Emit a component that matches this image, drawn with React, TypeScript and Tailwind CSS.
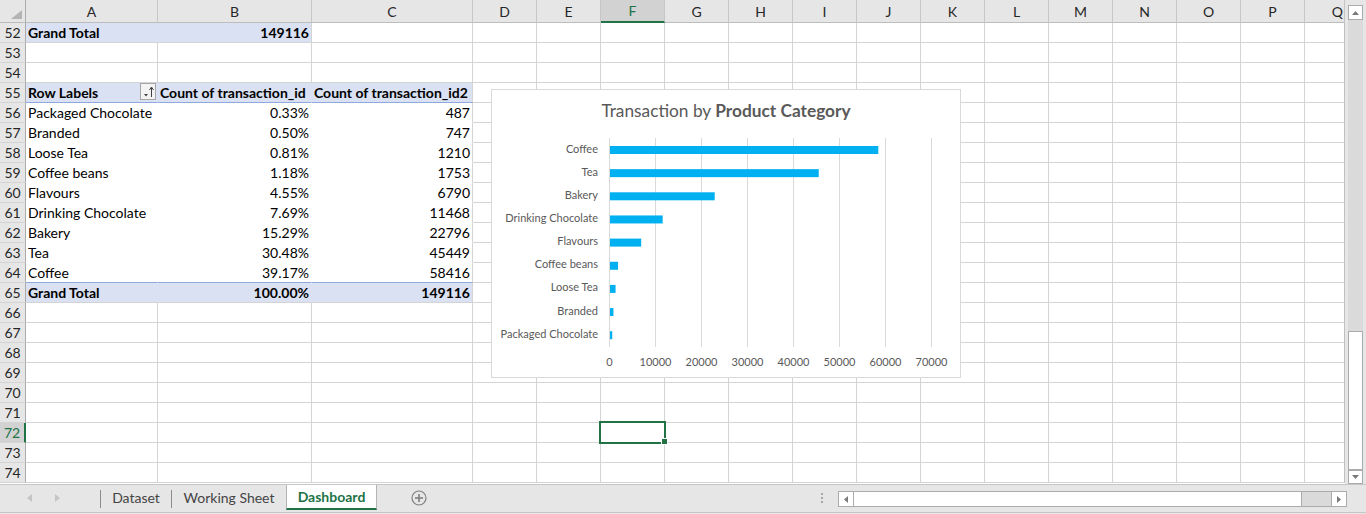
import React from 'react';

const COLS = ['A', 'B', 'C', 'D', 'E', 'F', 'G', 'H', 'I', 'J', 'K', 'L', 'M', 'N', 'O', 'P', 'Q'];
const ROWS = Array.from({ length: 23 }, (_, i) => 52 + i);

const PIVOT: [string, string, string][] = [
  ['Packaged Chocolate', '0.33%', '487'],
  ['Branded', '0.50%', '747'],
  ['Loose Tea', '0.81%', '1210'],
  ['Coffee beans', '1.18%', '1753'],
  ['Flavours', '4.55%', '6790'],
  ['Drinking Chocolate', '7.69%', '11468'],
  ['Bakery', '15.29%', '22796'],
  ['Tea', '30.48%', '45449'],
  ['Coffee', '39.17%', '58416'],
];

const CATS: [string, number][] = [
  ['Coffee', 58416],
  ['Tea', 45449],
  ['Bakery', 22796],
  ['Drinking Chocolate', 11468],
  ['Flavours', 6790],
  ['Coffee beans', 1753],
  ['Loose Tea', 1210],
  ['Branded', 747],
  ['Packaged Chocolate', 487],
];

const GRID = 'grid grid-cols-[26px_132px_154px_161px_repeat(13,64px)_40px]';

type Info = {
  text: string;
  right: boolean;
  bold: boolean;
  bg: string;
  br: string;
  bb: string;
  sort: boolean;
};

function cellInfo(r: number, c: number): Info {
  const info: Info = {
    text: '',
    right: false,
    bold: false,
    bg: 'bg-transparent',
    br: c === 16 ? 'border-r-[#bfbfbf]' : 'border-r-[#d4d4d4]',
    bb: 'border-b-[#d4d4d4]',
    sort: false,
  };
  if (r === 52 && c <= 1) {
    info.bg = 'bg-[#d9e1f2]';
    info.bold = true;
    if (c === 0) {
      info.text = 'Grand Total';
      info.br = 'border-r-[#d9e1f2]';
    } else {
      info.text = '149116';
      info.right = true;
    }
  }
  if (r === 55 && c <= 2) {
    info.bg = 'bg-[#d9e1f2]';
    info.bold = true;
    info.bb = 'border-b-[#8ea9db]';
    if (c < 2) info.br = 'border-r-[#d9e1f2]';
    info.text = ['Row Labels', 'Count of transaction_id', 'Count of transaction_id2'][c];
    if (c === 0) info.sort = true;
  }
  if (r >= 56 && r <= 64 && c <= 2) {
    const row = PIVOT[r - 56];
    info.text = row[c];
    info.right = c > 0;
    if (c < 2) info.br = 'border-r-white';
    info.bb = r === 64 ? 'border-b-[#8ea9db]' : 'border-b-white';
  }
  if (r === 65 && c <= 2) {
    info.bg = 'bg-[#d9e1f2]';
    info.bold = true;
    if (c < 2) info.br = 'border-r-[#d9e1f2]';
    info.text = ['Grand Total', '100.00%', '149116'][c];
    info.right = c > 0;
  }
  return info;
}

function SortIcon() {
  return (
    <div className="absolute right-[1px] top-0 w-[16px] h-[17px] border border-[#a6a6a6] bg-[#f3f3f3]">
      <svg width="14" height="15" viewBox="0 0 14 15" className="block">
        <path d="M3 10 L7 10 L5 12.5 Z" fill="#404040" />
        <line x1="10.5" y1="3.5" x2="10.5" y2="13" stroke="#404040" strokeWidth="1" />
        <path d="M8.5 6 L10.5 3 L12.5 6" fill="none" stroke="#404040" strokeWidth="1" />
      </svg>
    </div>
  );
}

function Cell({ r, c }: { r: number; c: number }) {
  const i = cellInfo(r, c);
  return (
    <div
      className={`relative h-[20px] border-r border-b ${i.br} ${i.bb} ${i.bg} whitespace-nowrap leading-[20px] text-[14px] text-black ${
        i.bold ? 'font-bold' : 'font-normal'
      } ${i.right ? 'text-right pr-[2px]' : 'text-left pl-[2px]'}`}
    >
      {i.text}
      {i.sort && <SortIcon />}
    </div>
  );
}

function HeaderRow() {
  return (
    <div className={`${GRID} h-[23px]`}>
      <div className="relative h-[23px] bg-[#e6e6e6] border-r border-b border-r-[#ababab] border-b-[#bdbdbd]">
        <svg width="26" height="23" className="absolute left-0 top-0">
          <path d="M22 10 L22 19 L11 19 Z" fill="#b4b4b4" />
        </svg>
      </div>
      {COLS.map((col, idx) => {
        const sel = col === 'F';
        return (
          <div
            key={col}
            className={`h-[23px] flex items-center text-[14px] ${
              idx === 16 ? 'justify-end pr-[1px]' : 'justify-center'
            } ${
              sel
                ? 'bg-[#d2d2d2] text-[#217346] border-r border-r-[#c6c6c6] border-b-2 border-b-[#217346]'
                : 'bg-[#e6e6e6] text-[#262626] border-r border-r-[#c6c6c6] border-b border-b-[#bdbdbd]'
            }`}
          >
            {col}
          </div>
        );
      })}
    </div>
  );
}

function RowHeader({ r }: { r: number }) {
  const sel = r === 72;
  return (
    <div
      className={`h-[20px] flex items-center justify-center text-[14px] border-b border-b-[#d4d4d4] ${
        sel
          ? 'bg-[#d2d2d2] text-[#217346] border-r-2 border-r-[#217346]'
          : 'bg-[#e6e6e6] text-[#262626] border-r border-r-[#ababab]'
      }`}
    >
      {r}
    </div>
  );
}

function Chart() {
  const x0 = 117.3;
  const step = 45.93;
  const s = step / 10000;
  const grid = Array.from({ length: 8 }, (_, k) => Math.round(x0 + k * step) + 0.5);
  return (
    <div className="absolute left-[491px] top-[89px] w-[470px] h-[289px] border border-[#d9d9d9] bg-white">
      <svg width="468" height="287" viewBox="0 0 468 287" className="block">
        <text x="234" y="27" textAnchor="middle" fontSize="17.3" fill="#595959">
          Transaction by <tspan fontWeight="700">Product Category</tspan>
        </text>
        {grid.map((x, k) => (
          <line key={k} x1={x} y1={48} x2={x} y2={257} stroke="#d9d9d9" strokeWidth="1" />
        ))}
        {CATS.map(([name, v], i) => {
          const top = 48 + 23.15 * i + 8;
          return (
            <g key={name}>
              <rect x={118} y={top} width={Math.max(v * s, 1.5)} height={8} fill="#00b0f0" />
              <text x="106" y={top + 6.5} textAnchor="end" fontSize="11" fill="#595959">
                {name}
              </text>
            </g>
          );
        })}
        {grid.map((x, k) => (
          <text key={k} x={x} y={275.5} textAnchor="middle" fontSize="11" fill="#595959">
            {k * 10000}
          </text>
        ))}
      </svg>
    </div>
  );
}

function VScroll() {
  return (
    <div className="w-[21px] h-[484px] bg-[#e6e6e6] pl-[3px] pt-[5px] flex flex-col">
      <div className="w-[15px] h-[15px] bg-white border border-[#ababab] flex items-center justify-center">
        <svg width="7" height="4" viewBox="0 0 7 4">
          <path d="M0 4 L3.5 0 L7 4 Z" fill="#7a7a7a" />
        </svg>
      </div>
      <div className="w-[15px] flex-1 bg-[#dadada] flex flex-col">
        <div className="mt-auto w-[15px] h-[139px] bg-white border border-[#ababab]" />
      </div>
      <div className="w-[15px] h-[14px] bg-white border border-[#ababab] flex items-center justify-center">
        <svg width="7" height="4" viewBox="0 0 7 4">
          <path d="M0 0 L7 0 L3.5 4 Z" fill="#7a7a7a" />
        </svg>
      </div>
    </div>
  );
}

function TabBar() {
  return (
    <div className="h-[30px] bg-[#e6e6e6] border-t border-t-[#c6c6c6] flex items-start text-[14px] text-[#444444] relative">
      <div className="w-[100px] h-[25px] flex items-center">
        <svg width="5" height="8" viewBox="0 0 5 8" className="ml-[27px]">
          <path d="M5 0 L0 4 L5 8 Z" fill="#c4c4c4" />
        </svg>
        <svg width="5" height="8" viewBox="0 0 5 8" className="ml-[23px]">
          <path d="M0 0 L5 4 L0 8 Z" fill="#c4c4c4" />
        </svg>
      </div>
      <div className="w-[1px] h-[18px] mt-[5px] bg-[#8c8c8c]" />
      <div className="w-[70px] h-[25px] flex items-center justify-center">Dataset</div>
      <div className="w-[1px] h-[18px] mt-[5px] bg-[#8c8c8c]" />
      <div className="w-[114px] h-[25px] flex items-center justify-center">Working Sheet</div>
      <div className="w-[91px] h-[25px] bg-white border-x border-x-[#b4b4b4] border-b-2 border-b-[#217346] flex items-center justify-center font-bold text-[#217346]">
        Dashboard
      </div>
      <div className="w-[84px] h-[25px] flex items-center justify-center">
        <svg width="16" height="16" viewBox="0 0 16 16">
          <circle cx="8" cy="8" r="7" fill="none" stroke="#808080" strokeWidth="1.2" />
          <line x1="8" y1="4" x2="8" y2="12" stroke="#808080" strokeWidth="1.6" />
          <line x1="4" y1="8" x2="12" y2="8" stroke="#808080" strokeWidth="1.6" />
        </svg>
      </div>
      <div className="w-[377px] h-[25px] flex items-center justify-end pr-[15px]">
        <div className="flex flex-col gap-[2px]">
          <div className="w-[2px] h-[2px] bg-[#a6a6a6]" />
          <div className="w-[2px] h-[2px] bg-[#a6a6a6]" />
          <div className="w-[2px] h-[2px] bg-[#a6a6a6]" />
        </div>
      </div>
      <div className="w-[509px] h-[16px] mt-[6px] flex border border-[#ababab] bg-[#dadada]">
        <div className="w-[15px] h-full bg-white border-r border-r-[#ababab] flex items-center justify-center">
          <svg width="4" height="7" viewBox="0 0 4 7">
            <path d="M4 0 L0 3.5 L4 7 Z" fill="#7a7a7a" />
          </svg>
        </div>
        <div className="w-[448px] h-full bg-white border-r border-r-[#ababab]" />
        <div className="flex-1" />
        <div className="w-[15px] h-full bg-white border-l border-l-[#ababab] flex items-center justify-center">
          <svg width="4" height="7" viewBox="0 0 4 7">
            <path d="M0 0 L4 3.5 L0 7 Z" fill="#7a7a7a" />
          </svg>
        </div>
      </div>
      <div className="absolute left-0 right-0 bottom-[1px] h-[1px] bg-[#c6c6c6]" />
    </div>
  );
}

export default function App() {
  return (
    <div className="w-[1366px] h-[514px] overflow-hidden bg-white font-['Lato',sans-serif] flex flex-col">
      <div className="flex h-[484px]">
        <div className="relative w-[1345px] h-[484px] overflow-hidden bg-white">
          <HeaderRow />
          {ROWS.map((r) => (
            <div key={r} className={`${GRID} h-[20px]`}>
              <RowHeader r={r} />
              {COLS.map((_, c) => (
                <Cell key={c} r={r} c={c} />
              ))}
            </div>
          ))}
          <Chart />
          <div className="absolute left-[599px] top-[421px] w-[67px] h-[23px] border-2 border-[#217346]" />
          <div className="absolute left-[661px] top-[438px] w-[7px] h-[7px] bg-[#217346] border border-white" />
        </div>
        <VScroll />
      </div>
      <TabBar />
    </div>
  );
}
